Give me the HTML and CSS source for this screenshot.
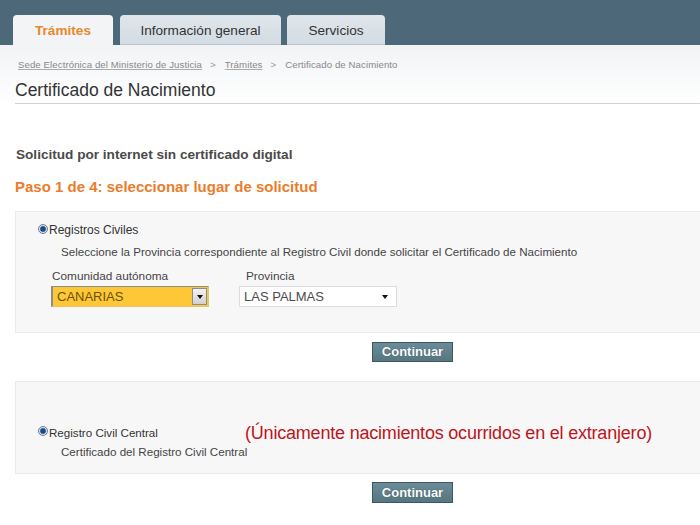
FILE: index.html
```html
<!DOCTYPE html>
<html lang="es">
<head>
<meta charset="utf-8">
<title>Certificado de Nacimiento</title>
<link rel="stylesheet" href="styles.css">
</head>
<body>
<header class="topbar">
  <nav class="tabs">
    <a class="tab tab-active">Trámites</a>
    <a class="tab tab-info">Información general</a>
    <a class="tab tab-serv">Servicios</a>
  </nav>
</header>
<main class="page">
  <div class="crumbs">
    <a class="crumb-link">Sede Electrónica del Ministerio de Justicia</a>
    <span class="sep">&gt;</span>
    <a class="crumb-link">Trámites</a>
    <span class="sep">&gt;</span>
    <span class="crumb-current">Certificado de Nacimiento</span>
  </div>
  <h1 class="title">Certificado de Nacimiento</h1>
  <h2 class="subtitle">Solicitud por internet sin certificado digital</h2>
  <h3 class="step">Paso 1 de 4: seleccionar lugar de solicitud</h3>

  <section class="panel panel-civil">
    <div class="radio-row">
      <span class="radio"></span>
      <span class="radio-label">Registros Civiles</span>
    </div>
    <p class="desc">Seleccione la Provincia correspondiente al Registro Civil donde solicitar el Certificado de Nacimiento</p>
    <div class="fields">
      <div class="field field-ca">
        <span class="field-label">Comunidad autónoma</span>
        <div class="select select-yellow">
          <span class="select-text">CANARIAS</span>
          <span class="select-btn"><span class="tri"></span></span>
        </div>
      </div>
      <div class="field field-prov">
        <span class="field-label field-label-prov">Provincia</span>
        <div class="select select-white">
          <span class="select-text">LAS PALMAS</span>
          <span class="select-arrow"><span class="tri"></span></span>
        </div>
      </div>
    </div>
  </section>
  <div class="actions"><button class="btn">Continuar</button></div>

  <section class="panel panel-central">
    <div class="central-row">
      <div class="central-left">
        <div class="radio-row">
          <span class="radio"></span>
          <span class="radio-label radio-label-central">Registro Civil Central</span>
        </div>
        <p class="desc desc-central">Certificado del Registro Civil Central</p>
      </div>
      <p class="note">(Únicamente nacimientos ocurridos en el extranjero)</p>
    </div>
  </section>
  <div class="actions actions-2"><button class="btn">Continuar</button></div>
</main>
</body>
</html>
```
FILE: styles.css
```css
html, body {
  margin: 0;
  padding: 0;
  background: #ffffff;
  font-family: "Liberation Sans", Arial, sans-serif;
  color: #333;
  overflow: hidden;
}

.topbar {
  height: 45px;
  background: #4d6879;
  box-sizing: border-box;
  padding: 15px 0 0 13px;
}

.tabs {
  display: flex;
  height: 30px;
}

.tab {
  display: flex;
  align-items: center;
  justify-content: center;
  height: 30px;
  box-sizing: border-box;
  border-radius: 4px 4px 0 0;
  font-size: 13.6px;
  color: #333;
  padding-top: 1px;
}

.tab-active {
  width: 100px;
  background: #f2f4f6;
  color: #e8882c;
  font-weight: bold;
  margin-right: 7px;
}

.tab-info {
  width: 161px;
  background: linear-gradient(#dfe6eb, #d3dce3);
  margin-right: 6px;
  border-bottom: 1px solid #b9c5ce;
}

.tab-serv {
  width: 98px;
  background: linear-gradient(#dfe6eb, #d3dce3);
  border-bottom: 1px solid #b9c5ce;
}

.page {
  background: linear-gradient(#f1f3f5 0px, #ffffff 60px);
  padding: 13px 0 0 15px;
  height: 467px;
  box-sizing: border-box;
}

.crumbs {
  font-size: 9.6px;
  line-height: 14px;
  color: #888;
  padding-left: 3px;
  display: flex;
  gap: 6px;
  letter-spacing: 0.1px;
}

.crumb-link {
  color: #888;
  text-decoration: underline;
  text-decoration-color: #aaa;
}

.crumb-link + .sep { margin-left: 2px; }

.sep { color: #999; margin-right: 3px; }

.crumb-current { color: #888; }

.title {
  margin: 8px 0 0 0;
  font-size: 17.5px;
  line-height: 20px;
  font-weight: normal;
  color: #333;
  padding-bottom: 3px;
  border-bottom: 1px solid #cfd3d6;
}

.subtitle {
  margin: 43px 0 0 1px;
  font-size: 13.6px;
  line-height: 16px;
  font-weight: bold;
  color: #4a4a4a;
}

.step {
  margin: 15px 0 0 0;
  font-size: 15px;
  line-height: 18px;
  font-weight: bold;
  color: #ea7d2c;
}

.panel {
  margin-top: 15px;
  background: #f7f7f7;
  border: 1px solid #ebebeb;
  border-right: none;
  box-sizing: border-box;
  padding-left: 22px;
}

.panel-civil {
  height: 122px;
  padding-top: 10px;
}

.radio-row {
  display: flex;
  align-items: center;
  height: 16px;
}

.radio {
  width: 10px;
  height: 10px;
  border-radius: 50%;
  box-sizing: border-box;
  border: 1px solid #6d7f90;
  background: radial-gradient(circle at 50% 50%, #1d4a86 0 2.2px, #5f86b8 2.8px, #dfe7ef 3.6px);
  margin-right: 1px;
  margin-top: -3px;
}

.radio-label {
  font-size: 12px;
  color: #333;
}

.radio-label-central { font-size: 11.6px; }

.desc {
  margin: 7px 0 0 23px;
  font-size: 11.6px;
  line-height: 14px;
  color: #444;
}

.fields {
  display: flex;
  margin-top: 10px;
  margin-left: 13px;
}

.field {
  display: flex;
  flex-direction: column;
}

.field-ca { width: 188px; }

.field-label {
  font-size: 11.8px;
  line-height: 14px;
  color: #444;
  padding-left: 1px;
  margin-bottom: 3px;
}

.field-label-prov { padding-left: 7px; }

.select {
  display: flex;
  align-items: center;
  height: 21px;
  box-sizing: border-box;
  width: 158px;
}

.select-yellow {
  background: #fdc738;
  border-top: 1px solid #8d8d8d;
  border-left: 2px solid #8d8d8d;
  border-right: 1px solid #e6c46a;
  border-bottom: 1px solid #e6c46a;
}

.select-white {
  background: #fff;
  border: 1px solid #dcdcdc;
}

.select-text {
  flex: 1;
  font-size: 13px;
  color: #4b4b4b;
  padding-left: 4px;
}

.select-yellow .select-text { color: #6b5200; }

.select-btn {
  width: 15px;
  height: 17px;
  box-sizing: border-box;
  background: linear-gradient(#f3f3f3, #d0d0d0);
  border: 1px solid #8c8c8c;
  display: flex;
  align-items: center;
  justify-content: center;
  margin-right: 1px;
}

.select-arrow {
  width: 14px;
  display: flex;
  justify-content: center;
  margin-right: 4px;
}

.tri {
  width: 0;
  height: 0;
  border-left: 3.5px solid transparent;
  border-right: 3.5px solid transparent;
  border-top: 4px solid #111;
}

.actions {
  margin-top: 9px;
  padding-left: 357px;
  display: flex;
}

.btn {
  width: 81px;
  height: 20px;
  padding: 0;
  box-sizing: border-box;
  background: linear-gradient(#6a8b98, #56777f);
  border: 1px solid #3d5865;
  color: #fff;
  font-family: "Liberation Sans", Arial, sans-serif;
  font-size: 13px;
  font-weight: bold;
  line-height: 18px;
  text-shadow: 0 0 1px #2e4550;
  border-radius: 0;
}

.panel-central {
  margin-top: 19px;
  height: 93px;
  padding-top: 42px;
}

.central-row {
  display: flex;
  align-items: flex-start;
}

.central-left {
  width: 207px;
  flex-shrink: 0;
}

.desc-central {
  margin-top: 5px;
  white-space: nowrap;
}

.note {
  margin: -2px 0 0 0;
  font-size: 18px;
  line-height: 22px;
  letter-spacing: -0.2px;
  color: #bd1520;
  white-space: nowrap;
}

.actions-2 {
  margin-top: 8px;
}

.actions-2 .btn { height: 21px; }
```
